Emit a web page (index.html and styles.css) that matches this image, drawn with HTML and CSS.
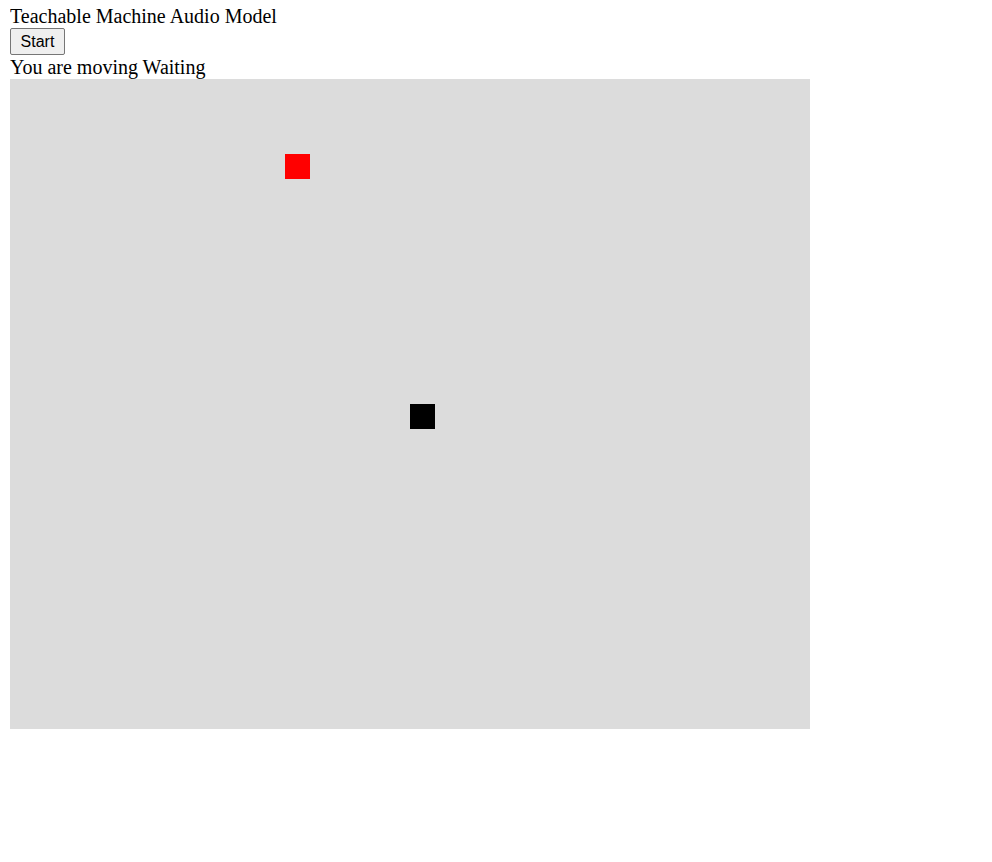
FILE: index.html
```html
<!DOCTYPE html>
<html>
<head>
<meta charset="utf-8">
<link rel="stylesheet" href="styles.css">
</head>
<body>
<div class="title">Teachable Machine Audio Model</div>
<button class="start" type="button">Start</button>
<div class="status">You are moving Waiting</div>
<div class="canvas">
  <div class="square red" style="left:275px;top:75px"></div>
  <div class="square black" style="left:400px;top:325px"></div>
</div>
</body>
</html>
```
FILE: styles.css
```css
body {
  margin: 5px 10px 10px;
  font-family: "Liberation Serif", "Times New Roman", serif;
  font-size: 20px;
  color: #000;
  background: #fff;
}
.title {
  line-height: 23px;
}
.start {
  display: block;
  font-family: "Liberation Sans", Arial, sans-serif;
  font-size: 16px;
  height: 27px;
  width: 55px;
  padding: 0;
  margin: 0;
  border: 1px solid #767676;
  border-radius: 2px;
  background: #efefef;
  color: #000;
}
.status {
  line-height: 24px;
}
.canvas {
  position: relative;
  width: 800px;
  height: 650px;
  background: #dcdcdc;
}
.square {
  position: absolute;
  width: 25px;
  height: 25px;
}
.red { background: #ff0000; }
.black { background: #000; }
```
